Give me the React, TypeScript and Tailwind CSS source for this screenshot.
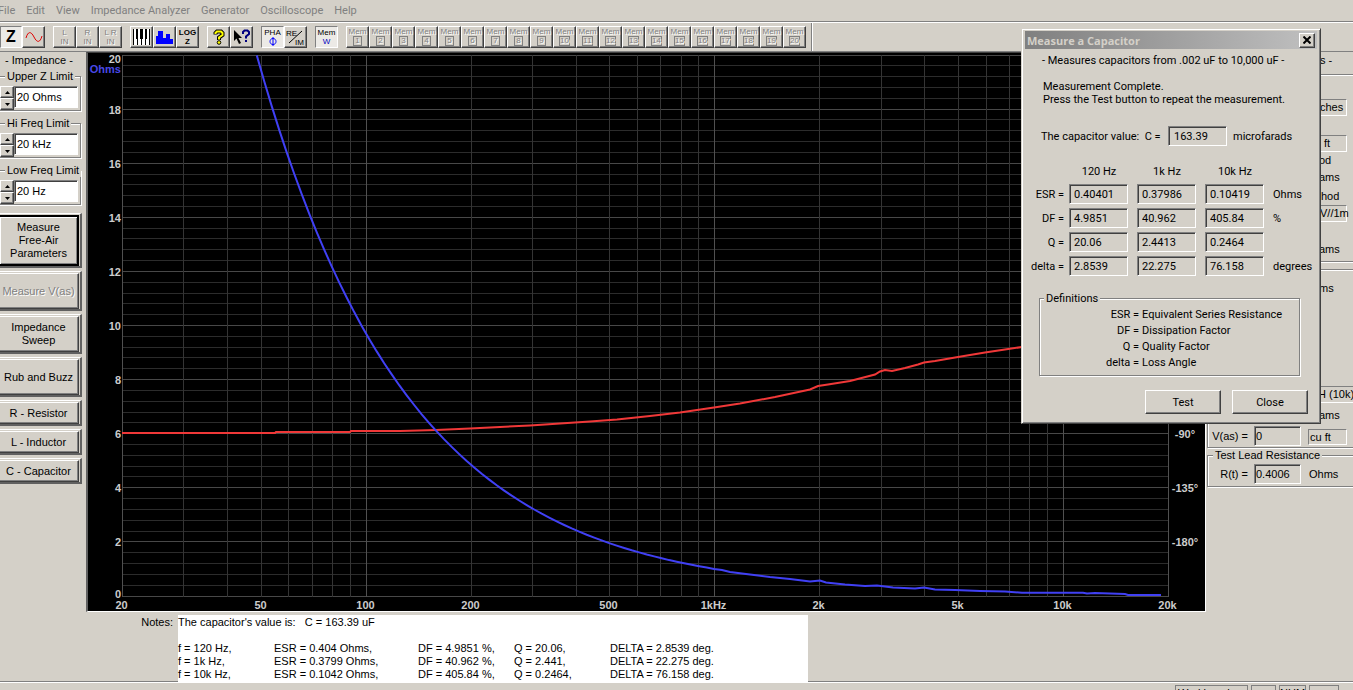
import type { ReactNode } from 'react'
import clsx from 'clsx'

const RAISED =
  'border border-t-white border-l-white border-r-[#404040] border-b-[#404040] shadow-[inset_-1px_-1px_0_#808080]'
const SUNKEN =
  'border border-t-[#808080] border-l-[#808080] border-r-white border-b-white shadow-[inset_1px_1px_0_#404040]'
const ETCHED = 'border border-[#808080] shadow-[1px_1px_0_#ffffff,inset_1px_1px_0_#ffffff]'

const MENUS = ['File', 'Edit', 'View', 'Impedance Analyzer', 'Generator', 'Oscilloscope', 'Help']

// ---------- toolbar ----------

type ToolProps = { label: string; pressed?: boolean; disabled?: boolean; className?: string; children: ReactNode }

function Tool({ label, pressed, disabled, className = 'w-[23px]', children }: ToolProps) {
  return (
    <button
      type="button"
      aria-label={label}
      aria-pressed={pressed}
      disabled={disabled}
      className={clsx(
        'flex h-[22px] shrink-0 flex-col items-center justify-center overflow-hidden text-[8px] leading-[9px]',
        pressed
          ? 'border border-t-[#808080] border-l-[#808080] border-r-white border-b-white bg-[#eceae6]'
          : RAISED,
        disabled && 'text-[#808080] [text-shadow:1px_1px_0_#ffffff]',
        className,
      )}
    >
      {children}
    </button>
  )
}

function PianoIcon() {
  return (
    <svg width="17" height="16" viewBox="0 0 17 16" shapeRendering="crispEdges">
      <path fill="#fff" d="M0 0h17v16H0z" />
      <path fill="#000" d="M0 0h1v16H0zM4 10h1v6H4zM8 10h1v6H8zM12 10h1v6h-1zM16 0h1v16h-1zM3 0h2v10H3zM7 0h3v10H7zM12 0h2v10h-2z" />
    </svg>
  )
}

function SpectrumIcon() {
  return (
    <svg width="17" height="14" viewBox="0 0 17 14" shapeRendering="crispEdges">
      <path fill="#0000ff" d="M0 6h2V1h5v7h3V4h4v5h3v5H0z" />
    </svg>
  )
}

function QuestionIcon() {
  return (
    <svg width="12" height="16" viewBox="0 0 12 16">
      <path fill="none" stroke="#000" strokeWidth="4" d="M2.5 5.500V4L4 2.500h4L9.500 4v2L6 8.500V11" />
      <path fill="none" stroke="#ffff00" strokeWidth="2" d="M2.500 5V4L4 2.500h4L9.500 4v2L6 8.500V10.500" />
      <circle cx="6" cy="13.500" r="1.800" fill="#ffff00" stroke="#000" />
    </svg>
  )
}

function ContextHelpIcon() {
  return (
    <svg width="18" height="16" viewBox="0 0 18 16">
      <path fill="#000" d="M1 1v11l2.500-2.500 2.500 5.500 2-1-2.500-5H9z" />
      <path fill="none" stroke="#000080" strokeWidth="2" d="M10 5V3L11.500 1.500h3L16 3v2l-3 2.500V9.500" />
      <path fill="#000080" d="M12 11h2v2h-2z" />
    </svg>
  )
}

function Toolbar() {
  return (
    <div className="flex h-[31px] shrink-0 border-t border-b border-[#808080] pt-[4px] shadow-[inset_0_1px_0_#ffffff]">
      <div className="flex flex-1 gap-[8px]">
        <div className="flex">
          <Tool label="Impedance" pressed className="w-[22px]">
            <span className="text-[16px] leading-[16px] font-black">Z</span>
          </Tool>
          <Tool label="Generator">
            <svg width="18" height="12" viewBox="0 0 18 12">
              <path d="M1 7C3 0 6 0 9 6s6 6 8-1" fill="none" stroke="#e00000" />
            </svg>
          </Tool>
        </div>
        <div className="flex">
          {['L', 'R', 'L R'].map(name => (
            <Tool key={name} label={`${name} input`} disabled>
              <span>{name}</span>
              <span>IN</span>
            </Tool>
          ))}
        </div>
        <div className="flex">
          <Tool label="Note scale">
            <PianoIcon />
          </Tool>
          <Tool label="Spectrum">
            <SpectrumIcon />
          </Tool>
          <Tool label="Log impedance">
            <span className="font-bold">LOG</span>
            <span className="font-bold">Z</span>
          </Tool>
        </div>
        <div className="flex">
          <Tool label="About">
            <QuestionIcon />
          </Tool>
          <Tool label="Context help">
            <ContextHelpIcon />
          </Tool>
        </div>
        <div className="flex">
          <Tool label="Phase" pressed>
            <span>PHA</span>
            <svg width="8" height="9" viewBox="0 0 8 9">
              <path d="M4 0v9M4 1.500C0 1.500 0 7.500 4 7.500s4-6 0-6" fill="none" stroke="#0000ff" />
            </svg>
          </Tool>
          <Tool label="Real and imaginary">
            <svg width="20" height="17" viewBox="0 0 20 17">
              <path d="M3 14 16 2" stroke="#000" />
              <text x="0" y="7" fontSize="8">RE</text>
              <text x="9" y="16" fontSize="8">IM</text>
            </svg>
          </Tool>
        </div>
        <Tool label="Working memory" pressed>
          <span>Mem</span>
          <span className="text-[#0000c0]">W</span>
        </Tool>
        <div className="flex">
          {Array.from({ length: 20 }, (_, i) => (
            <Tool key={i} label={`Memory ${i + 1}`} disabled>
              <span className="leading-[8px]">Mem</span>
              <span className="h-[10px] min-w-[9px] border border-[#808080] leading-[8px]">{i + 1}</span>
            </Tool>
          ))}
        </div>
        <div className="-mt-[3px] ml-[-3px] w-[2px] border-l border-[#808080] bg-white" />
      </div>
    </div>
  )
}

// ---------- left column ----------

const LIMITS = [
  { label: 'Upper Z Limit', value: '20 Ohms' },
  { label: 'Hi Freq Limit', value: '20 kHz' },
  { label: 'Low Freq Limit', value: '20 Hz' },
]

const ACTIONS = [
  { label: 'Measure Free-Air Parameters', className: 'h-[51px] border-2 border-black shadow-[inset_1px_1px_0_#ffffff,inset_-1px_-1px_0_#808080] px-[8px]' },
  { label: 'Measure V(as)', className: `h-[36px] text-[#808080] [text-shadow:1px_1px_0_#ffffff] ${RAISED}`, disabled: true },
  { label: 'Impedance Sweep', className: `h-[36px] px-[8px] ${RAISED}` },
  { label: 'Rub and Buzz', className: `h-[36px] ${RAISED}` },
  { label: 'R - Resistor', className: `h-[22px] ${RAISED}` },
  { label: 'L - Inductor', className: `h-[22px] ${RAISED}` },
  { label: 'C - Capacitor', className: `h-[22px] ${RAISED}` },
]

function Spin({ label, down }: { label: string; down?: boolean }) {
  return (
    <button type="button" aria-label={label} className={`flex h-[12px] items-center justify-center ${RAISED}`}>
      <svg width="5" height="3" viewBox="0 0 5 3">
        <path d={down ? 'M0 0h5L2.500 3z' : 'M0 3h5L2.500 0z'} />
      </svg>
    </button>
  )
}

function Sidebar() {
  return (
    <aside className="w-[86px] shrink-0 overflow-hidden">
      <h2 className="mt-[1px] h-[16px] w-[78px] text-center leading-[14px]">- Impedance -</h2>
      {LIMITS.map(({ label, value }) => (
        <fieldset key={label} className="relative mb-[5px] -ml-[4px] h-[42px] w-[85px] pl-[4px]">
          <div className={`absolute inset-x-0 top-[7px] bottom-0 ${ETCHED}`} />
          <legend className="relative float-left ml-[5px] bg-[#d4d0c8] px-[2px] leading-[14px] whitespace-nowrap">
            {label}
          </legend>
          <div className="relative clear-both flex pt-[3px]">
            <div className="flex w-[14px] flex-col">
              <Spin label={`Raise ${label}`} />
              <Spin label={`Lower ${label}`} down />
            </div>
            <input aria-label={label} defaultValue={value} className={`h-[22px] w-[64px] bg-white pl-[2px] ${SUNKEN}`} />
          </div>
        </fieldset>
      ))}
      <div className="mt-[8px] flex flex-col gap-[3px]">
        {ACTIONS.map(({ label, className, disabled }) => (
          <div
            key={label}
            className="w-[82px] border-t border-r-2 border-b-2 border-t-white border-r-[#606060] border-b-[#606060] pt-[1px]"
          >
            <button
              type="button"
              disabled={disabled}
              className={`-ml-[2px] flex w-[81px] items-center justify-center leading-[13px] ${className}`}
            >
              {label}
            </button>
          </div>
        ))}
      </div>
    </aside>
  )
}

// ---------- chart ----------

const xOf = (hz: number) => Math.round(34 + 348.7 * Math.log10(hz / 20)) + 0.5
const yOf = (ohms: number) => Math.floor(543 - 27.05 * ohms) + 0.5

const FREQS = [1, 2, 3].flatMap(d => Array.from({ length: 9 }, (_, i) => (i + 1) * 10 ** d)).filter(f => f >= 20)
const X_LABELS: [number, string][] = [
  [20, '20'],
  [50, '50'],
  [100, '100'],
  [200, '200'],
  [500, '500'],
  [1000, '1kHz'],
  [2000, '2k'],
  [5000, '5k'],
  [10000, '10k'],
  [20000, '20k'],
]

// |Z| of 163.39 uF with a small series resistance
const lowBand = Array.from({ length: 61 }, (_, i) => {
  const hz = 48.7 * (950 / 48.7) ** (i / 60)
  const x = 34 + 348.7 * Math.log10(hz / 20)
  const y = 543.5 - 27.05 * Math.hypot(974.1 / hz, 0.3)
  return `${x.toFixed(1)},${y.toFixed(1)}`
}).join(' ')

const HIGH_BAND =
  '626,516 634,517 642,519 662,521.5 682,524 702,526 722,528.5 732,527.5 738,529.5 757,531.500 777,533 789,532.500 805,534.500 827,535.500 836,534.500 847,536.500 867,537 892,538 917,538.500 934,539.700 995,539.700 999,540.500 1007,540 1037,541 1040,542 1073,542'

const PHASE =
  '34,380 187,380 188,379 262,379 263,378 312,378 348,377 382,375.500 412,374 442,372.500 472,370.500 502,368.500 529,366.500 562,363 592,359.500 626,354.500 652,350.500 687,344 722,336.500 730,333 740,331.500 762,328 787,321.500 792,318.500 797,317 804,318 817,315 830,311.500 836,309.500 847,308 870,304 897,299.500 917,296.500 934,294 960,290 1000,285'

function ImpedanceChart() {
  return (
    <div className="border-t border-r border-b border-l-2 border-t-[#404040] border-r-white border-b-white border-l-[#606060] bg-black">
      <svg
        viewBox="0 0 1117 558"
        className="block h-auto w-full font-bold"
        fontSize="11"
        fill="#cccccc"
        role="img"
        aria-label="Impedance sweep"
      >
        <g shapeRendering="crispEdges">
          {Array.from({ length: 51 }, (_, i) => (
            <path key={i} d={`M34 ${yOf(i * 0.4)}H1081`} stroke={i % 5 === 0 ? '#484848' : '#2c2c2c'} />
          ))}
          {FREQS.map(f => (
            <path key={f} d={`M${xOf(f)} 2V544`} stroke={[20, 100, 1000].includes(f) ? '#505050' : '#343434'} />
          ))}
          <path d={`M${xOf(10000)} 2V544M${xOf(20000)} 2V544`} stroke="#505050" />
        </g>
        <polyline points={PHASE} fill="none" stroke="#f03838" strokeWidth="2" />
        <polyline points={`${lowBand} ${HIGH_BAND}`} fill="none" stroke="#4040f4" strokeWidth="2" />
        {Array.from({ length: 11 }, (_, i) => (
          <text key={i} x="33" y={i === 0 ? 545 : i === 10 ? 10 : yOf(i * 2) + 4} textAnchor="end">
            {i * 2}
          </text>
        ))}
        <text x="33" y="20" textAnchor="end" fill="#4848e8">
          Ohms
        </text>
        {X_LABELS.map(([hz, label]) => (
          <text key={label} x={xOf(hz) - 1} y="556" textAnchor="middle">
            {label}
          </text>
        ))}
        {['-90°', '-135°', '-180°'].map((label, i) => (
          <text key={label} x="1097" y={385 + i * 54} textAnchor="middle">
            {label}
          </text>
        ))}
      </svg>
    </div>
  )
}

// ---------- right column ----------

const BOX = 'border border-t-[#808080] border-l-[#808080] border-r-white border-b-white'

function SpeakerPanel() {
  return (
    <aside className="w-[147px] shrink-0 overflow-hidden whitespace-nowrap">
      <p className="mt-[1px] h-[21px] pl-[114px] leading-[14px]">s -</p>
      <div className={`-mr-[3px] ml-[1px] h-[188px] pl-[111px] leading-[15px] ${ETCHED}`}>
        <p className={`mt-[24px] w-[28px] ${BOX}`}>ches</p>
        <p className={`mt-[19px] w-[28px] pl-[4px] ${BOX}`}>ft</p>
        <p className="mt-[1px]">od</p>
        <p className="mt-[2px]">ams</p>
        <p className="mt-[4px] pl-[2px]">hod</p>
        <p className={`mt-[1px] w-[28px] ${BOX}`}>V//1m</p>
        <p className="mt-[20px]">ams</p>
      </div>
      <div className={`-mr-[3px] mt-[7px] ml-[1px] h-[179px] ${ETCHED}`}>
        <div className="pl-[109px] leading-[15px]">
          <p className="mt-[11px] pl-[2px]">ms</p>
          <p className={`mt-[90px] w-[37px] ${BOX}`}>H (10k)</p>
          <p className="mt-[5px] pl-[2px]">ams</p>
        </div>
        <div className="mt-[3px] flex items-center">
          <label htmlFor="vas" className="w-[46px] pr-[6px] text-right">
            V(as) =
          </label>
          <input id="vas" readOnly value="0" className={`h-[20px] w-[47px] pl-[1px] ${SUNKEN}`} />
          <span className={`mt-[2px] ml-[7px] h-[16px] w-[39px] pl-[1px] leading-[15px] ${BOX}`}>cu ft</span>
        </div>
      </div>
      <fieldset className="relative mt-[1px] -mr-[3px] ml-[1px] h-[38px]">
        <div className={`absolute inset-x-0 top-[6px] bottom-0 ${ETCHED}`} />
        <legend className="relative float-left ml-[6px] bg-[#d4d0c8] px-[2px] leading-[13px]">Test Lead Resistance</legend>
        <div className="relative clear-both flex items-center pt-[2px]">
          <label htmlFor="rt" className="w-[47px] pr-[6px] text-right">
            R(t) =
          </label>
          <input id="rt" readOnly value="0.4006" className={`h-[20px] w-[47px] pl-[1px] ${SUNKEN}`} />
          <span className="ml-[8px]">Ohms</span>
        </div>
      </fieldset>
    </aside>
  )
}

// ---------- notes and status bar ----------

const NOTES = [
  ['f = 120 Hz,', 'ESR = 0.404 Ohms,', 'DF = 4.9851 %,', 'Q = 20.06,', 'DELTA = 2.8539 deg.'],
  ['f = 1k Hz,', 'ESR = 0.3799 Ohms,', 'DF = 40.962 %,', 'Q = 2.441,', 'DELTA = 22.275 deg.'],
  ['f = 10k Hz,', 'ESR = 0.1042 Ohms,', 'DF = 405.84 %,', 'Q = 0.2464,', 'DELTA = 76.158 deg.'],
]
const NOTE_WIDTHS = ['w-[96px]', 'w-[144px]', 'w-[96px]', 'w-[96px]', 'w-[150px]']

function Notes() {
  return (
    <section className="flex shrink-0 border-b border-[#808080] pt-[3px] leading-[13px]">
      <span id="notes" className="w-[178px] pt-[1px] pr-[5px] text-right">
        Notes:
      </span>
      <div aria-labelledby="notes" className="-mb-[1px] h-[67px] w-[630px] bg-white pt-[1px]">
        <p className="h-[26px] whitespace-pre">The capacitor's value is:   C = 163.39 uF</p>
        <table className="table-fixed">
          <tbody>
            {NOTES.map(row => (
              <tr key={row[0]}>
                {row.map((cell, i) => (
                  <td key={cell} className={`p-0 ${NOTE_WIDTHS[i]}`}>
                    {cell}
                  </td>
                ))}
              </tr>
            ))}
          </tbody>
        </table>
      </div>
    </section>
  )
}

function StatusBar() {
  return (
    <footer className="flex h-[22px] shrink-0 justify-end gap-[3px] border-t border-white pt-[2px] pr-[14px] leading-[14px]">
      <span className="w-[73px] border border-[#808080] pl-[2px]">Workbench</span>
      <span className="w-[25px] border border-[#808080]" />
      <span className="w-[27px] border border-[#808080] text-center">NUM</span>
      <span className="w-[30px] border border-[#808080]" />
    </footer>
  )
}

// ---------- dialog ----------

const READINGS = [
  { name: 'ESR', values: ['0.40401', '0.37986', '0.10419'], unit: 'Ohms' },
  { name: 'DF', values: ['4.9851', '40.962', '405.84'], unit: '%' },
  { name: 'Q', values: ['20.06', '2.4413', '0.2464'], unit: '' },
  { name: 'delta', values: ['2.8539', '22.275', '76.158'], unit: 'degrees' },
]

const DEFINITIONS = [
  ['ESR', 'Equivalent Series Resistance'],
  ['DF', 'Dissipation Factor'],
  ['Q', 'Quality Factor'],
  ['delta', 'Loss Angle'],
]

function CapacitorDialog() {
  return (
    <div
      role="dialog"
      aria-labelledby="dialog-title"
      className="absolute top-[28px] right-[32px] w-[300px] border border-t-[#d4d0c8] border-r-[#404040] border-b-[#404040] border-l-[#d4d0c8] bg-[#d4d0c8] p-[2px] pb-[9px] font-[Roboto,sans-serif] text-[11px] leading-[13px] whitespace-nowrap shadow-[inset_1px_1px_0_#ffffff,inset_-1px_-1px_0_#808080]"
    >
      <div className="mx-[1px] flex h-[18px] items-center justify-between bg-linear-to-r from-[#808080] to-[#c0c0c0] pr-[2px] pl-[2px]">
        <h1 id="dialog-title" className="font-['Open_Sans',sans-serif] font-bold text-[#d4d0c8]">
          Measure a Capacitor
        </h1>
        <button type="button" aria-label="Close dialog" className={`flex h-[15px] w-[16px] items-center justify-center bg-[#d4d0c8] ${RAISED}`}>
          <svg width="8" height="8" viewBox="0 0 8 8">
            <path d="M0.500 0.500l7 7M7.500 0.500l-7 7" stroke="#000" strokeWidth="2" />
          </svg>
        </button>
      </div>
      <p className="mt-[5px] pl-[18px]">- Measures capacitors from .002 uF to 10,000 uF -</p>
      <p className="mt-[13px] pl-[19px]">
        Measurement Complete.
        <br />
        Press the Test button to repeat the measurement.
      </p>
      <div className="mt-[20px] flex items-center pl-[17px]">
        <label htmlFor="cap" className="w-[127px] whitespace-pre">
          The capacitor value:  C =
        </label>
        <input id="cap" readOnly value="163.39" className={`h-[20px] w-[59px] pl-[5px] ${SUNKEN}`} />
        <span className="ml-[6px]">microfarads</span>
      </div>
      <table className="mt-[15px] table-fixed">
        <thead>
          <tr className="h-[21px]">
            <th className="w-[45px]" />
            <th className="w-[68px] pr-[8px] font-normal">120 Hz</th>
            <th className="w-[68px] pr-[8px] font-normal">1k Hz</th>
            <th className="w-[68px] pr-[8px] font-normal">10k Hz</th>
            <th />
          </tr>
        </thead>
        <tbody>
          {READINGS.map(({ name, values, unit }) => (
            <tr key={name} className="h-[24px]">
              <th className="pr-[5px] text-right font-normal">{name} =</th>
              {values.map(value => (
                <td key={value}>
                  <input readOnly aria-label={name} value={value} className={`block h-[20px] w-[59px] pl-[4px] ${SUNKEN}`} />
                </td>
              ))}
              <td>{unit}</td>
            </tr>
          ))}
        </tbody>
      </table>
      <fieldset className="relative mx-[15px] mt-[14px] h-[84px] w-[261px]">
        <div className={`absolute inset-x-0 top-[6px] bottom-0 ${ETCHED}`} />
        <legend className="relative float-left ml-[5px] bg-[#d4d0c8] px-[2px]">Definitions</legend>
        <dl className="relative clear-both grid grid-cols-[100px_1fr] gap-x-[3px] pt-[2px] leading-[16px]">
          {DEFINITIONS.map(([term, text]) => (
            <div key={term} className="contents">
              <dt className="text-right">{term} =</dt>
              <dd>{text}</dd>
            </div>
          ))}
        </dl>
      </fieldset>
      <div className="mt-[14px] flex justify-end gap-[11px] pr-[10px]">
        <button type="button" className={`h-[24px] w-[76px] ${RAISED}`}>
          Test
        </button>
        <button type="button" className={`h-[24px] w-[76px] ${RAISED}`}>
          Close
        </button>
      </div>
    </div>
  )
}

export default function App() {
  return (
    <div className="relative flex h-screen flex-col overflow-hidden bg-[#d4d0c8] font-['Liberation_Sans',Arial,sans-serif] text-[11px] text-black">
      <nav className="-ml-[2px] flex h-[21px] shrink-0 items-center gap-[11px] pt-[1px] font-[Roboto,sans-serif] text-[#808080]">
        {MENUS.map(menu => (
          <button key={menu} type="button">
            {menu}
          </button>
        ))}
      </nav>
      <Toolbar />
      <div className="flex shrink-0">
        <Sidebar />
        <main className="min-w-0 flex-1">
          <ImpedanceChart />
        </main>
        <SpeakerPanel />
      </div>
      <Notes />
      <StatusBar />
      <CapacitorDialog />
    </div>
  )
}
